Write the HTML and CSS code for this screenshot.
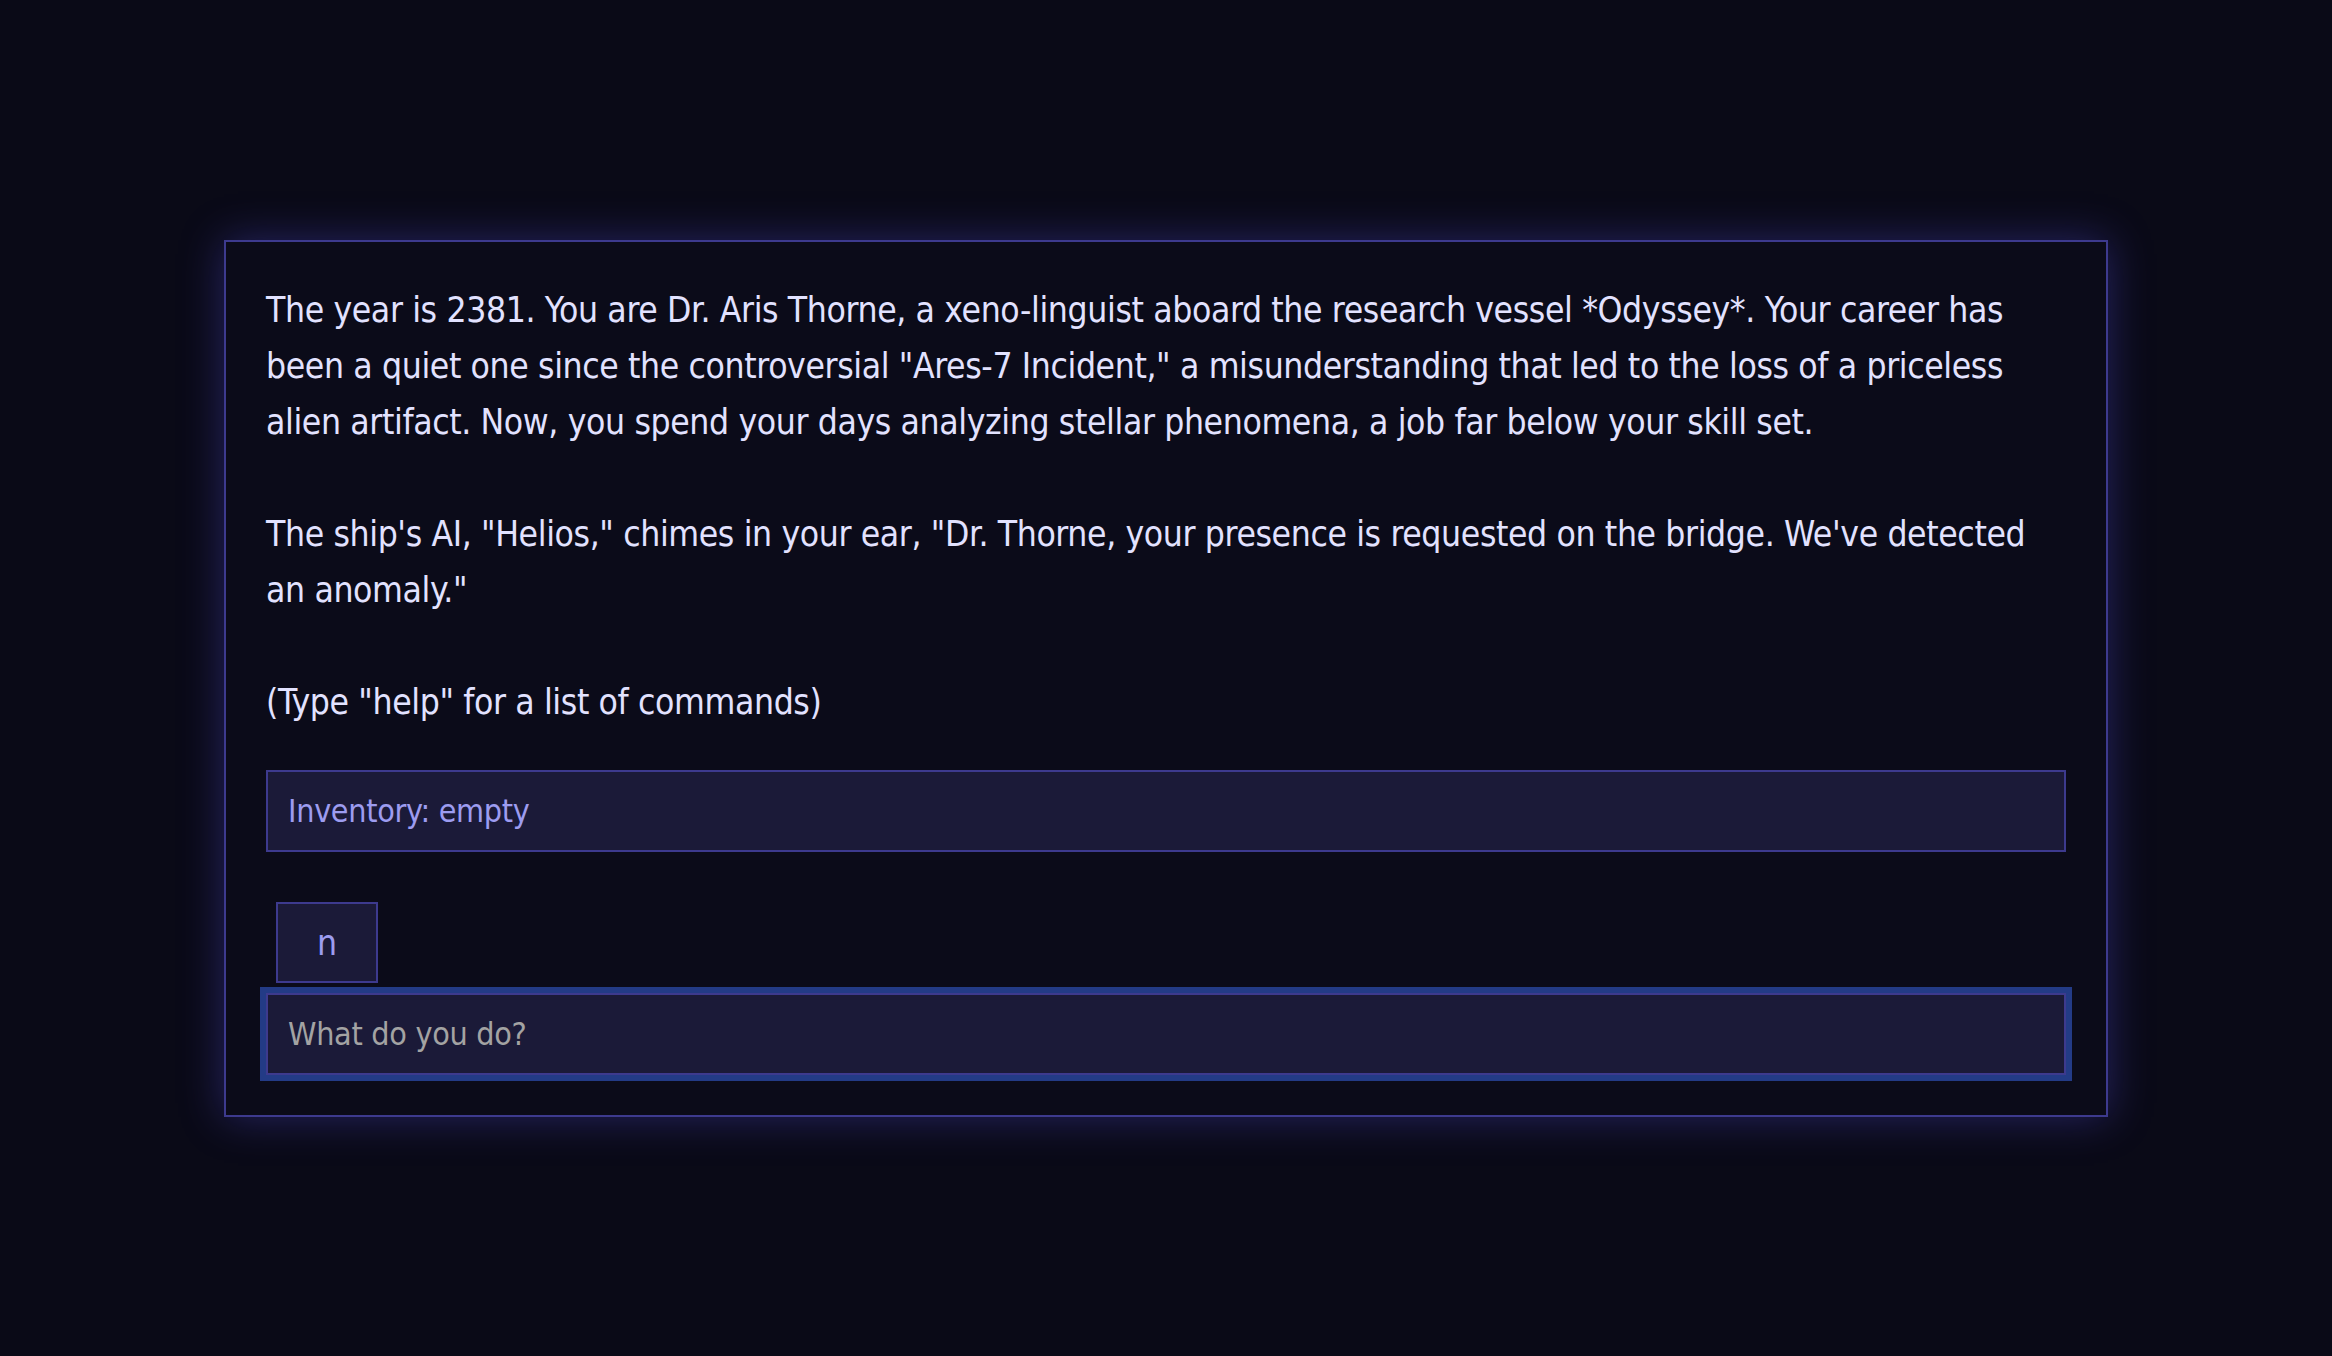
FILE: index.html
```html
<!doctype html>
<html lang="en">

<head>
    <meta charset="UTF-8">
    <meta name="viewport" content="width=device-width, initial-scale=1.0">
    <title>Odyssey</title>
    <link rel="stylesheet" href="styles.css">
</head>

<body>
    <div class="game">
        <div class="story">
            <p>The year is 2381. You are Dr. Aris Thorne, a xeno-linguist aboard the research vessel *Odyssey*. Your career has been a quiet one since the controversial "Ares-7 Incident," a misunderstanding that led to the loss of a priceless alien artifact. Now, you spend your days analyzing stellar phenomena, a job far below your skill set.</p>
            <p>The ship's AI, "Helios," chimes in your ear, "Dr. Thorne, your presence is requested on the bridge. We've detected an anomaly."</p>
            <p>(Type "help" for a list of commands)</p>
        </div>
        <div class="inventory">Inventory: empty</div>
        <div class="choices">
            <button type="button" class="choice">n</button>
        </div>
        <input type="text" class="command" placeholder="What do you do?" autofocus>
    </div>
</body>

</html>
```

FILE: styles.css
```css
body {
    margin: 0;
    min-height: 100vh;
    background: #0a0a17;
    display: flex;
    align-items: center;
    justify-content: center;
    font-family: "DejaVu Sans Condensed", "DejaVu Sans", sans-serif;
}

.game {
    box-sizing: border-box;
    width: 1884px;
    padding: 40px;
    background: #0b0b19;
    border: 2px solid #3d3a8e;
    box-shadow: 0 0 40px rgba(72, 66, 190, 0.45);
}

.story {
    color: #e2e2ff;
    font-size: 35.2px;
    line-height: 56px;
    letter-spacing: -0.38px;
    margin-bottom: 40px;
}

.story p {
    margin: 0;
}

.story p + p {
    margin-top: 56px;
}

.inventory {
    background: #1b1a38;
    border: 2px solid #3d3a8e;
    padding: 20px;
    color: #9d9cf0;
    font-size: 32px;
    letter-spacing: -0.3px;
    margin-bottom: 40px;
}

.choices {
    display: flex;
}

.choice {
    margin: 10px;
    padding: 18px 39px;
    background: #1b1a38;
    border: 2px solid #3d3a8e;
    color: #9d9cf0;
    font-family: inherit;
    font-size: 35.2px;
    cursor: pointer;
}

.command {
    display: block;
    box-sizing: border-box;
    width: 100%;
    padding: 20px;
    background: #1b1a38;
    border: 2px solid #3d3a8e;
    color: #e2e2ff;
    caret-color: #4d7bff;
    font-family: inherit;
    font-size: 32px;
    letter-spacing: -0.3px;
}

.command::placeholder {
    color: #a3a3a3;
}

.command:focus {
    outline: 6px solid #233b86;
}
```
